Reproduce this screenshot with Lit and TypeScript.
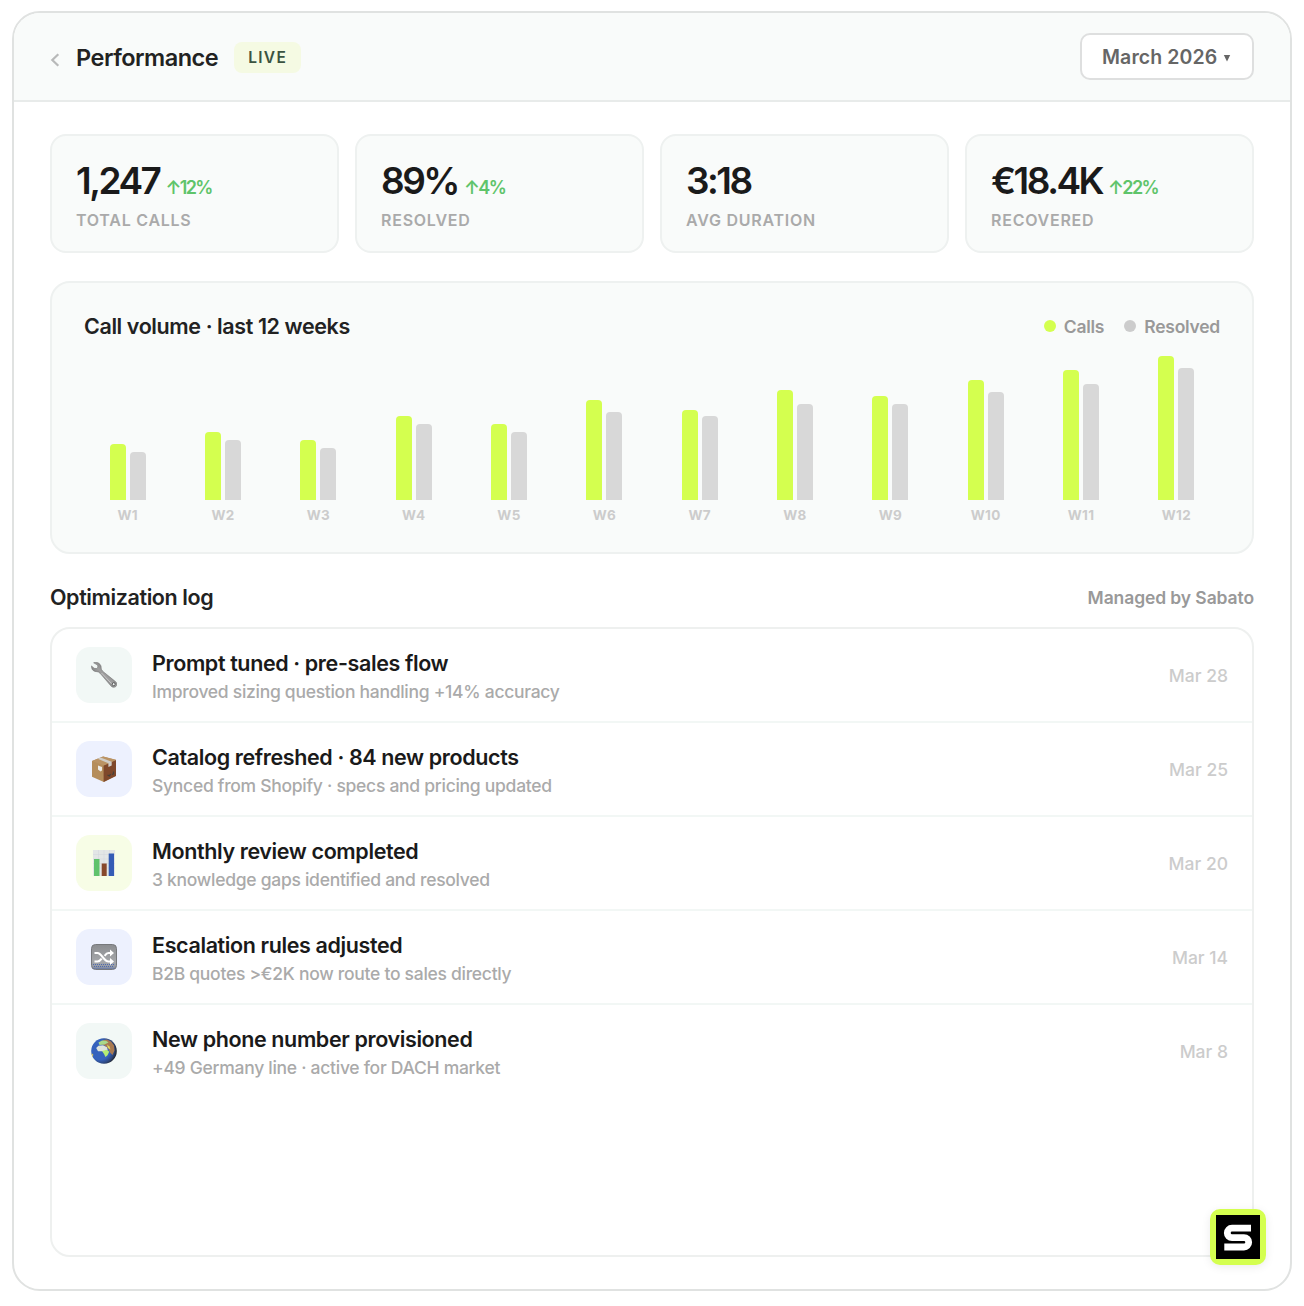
import { css, html, LitElement, svg } from 'lit'
import { customElement, property } from 'lit/decorators.js'

const stats = [
  { value: '1,247', delta: '↑12%', label: 'Total calls' },
  { value: '89%', delta: '↑4%', label: 'Resolved' },
  { value: '3:18', delta: '', label: 'Avg duration' },
  { value: '€18.4K', delta: '↑22%', label: 'Recovered' },
]

// [calls, resolved] per week, as bar heights
const weeks = [
  [56, 48],
  [68, 60],
  [60, 52],
  [84, 76],
  [76, 68],
  [100, 88],
  [90, 84],
  [110, 96],
  [104, 96],
  [120, 108],
  [130, 116],
  [144, 132],
]

const wrench = svg`
  <defs>
    <linearGradient id="steel" x1="0" y1="1" x2="1" y2="0">
      <stop offset="0" stop-color="#4c4c4c" />
      <stop offset="0.5" stop-color="#a0a0a0" />
      <stop offset="1" stop-color="#555" />
    </linearGradient>
  </defs>
  <path
    d="M2.6.8 6.6 3.1 6.9 5.2 5.4 6.6 3.2 6.3.5 3.9C.3 6.6 1.6 8.8 4 9.4c1.3.3 2.4.2 3.4.6 1.2.6 2 1.6 2.8 2.6l9.6 11.2c1.4 1.7 3.6 2 5.1.7 1.4-1.3 1.3-3.5-.4-4.9L12.9 10.2c-1.1-1-2-1.7-2.5-2.9-.4-1 0-2-.4-3.3C9.2 1.7 7 .2 4.3.2z"
    fill="url(#steel)"
    stroke="#666"
    stroke-width="0.5"
  />
  <path d="m10.5 11 10.2 10.8" stroke="#cacaca" stroke-width="0.9" />
  <circle cx="22.7" cy="22.2" r="1.5" fill="#f0f5f3" stroke="#444" stroke-width="0.8" />
`

const parcel = svg`
  <path d="m1 5 11-4.5L25 3.8v16L12.8 26 1 20.8z" fill="#b58d5b" />
  <path d="M12.6 9.5 25 4v16l-12.4 6z" fill="#7f482b" />
  <path d="m1 5 11.3-4.5L25 4 12.6 9.5z" fill="#ba9364" />
  <path d="m6.6 2.7 3-1.2 11.100 4.300v3.800l-3.300 1.500V7.300z" fill="#cfcdc8" />
  <path d="m7 9.500 4 1.600v3.400l-1.500 1L7 13.600z" fill="#ecebe7" />
  <path d="m16.5 19 2 1 1-2m1.500.5 1.500-.7v-2.300" fill="none" stroke="#45413a" stroke-width="1.2" />
`

const barChart = svg`
  <path d="M2 0h22v26H2z" fill="#e3e6e6" />
  <path d="M2 4.5h22M2 9h22M2 13.5h22M2 18h22M7.5 0v26M13 0v26M18.5 0v26" stroke="#d2d7dc" stroke-width="0.5" />
  <path d="M3 9h5.500v17H3z" fill="#60c26c" />
  <path d="M10.7 13.5h5V26h-5z" fill="#87482c" />
  <path d="M17.7 3.500H23V26h-5.300z" fill="#355cb5" />
`

const shuffle = svg`
  <defs>
    <linearGradient id="key" x1="0" y1="0" x2="0" y2="1">
      <stop offset="0" stop-color="#8b8d90" />
      <stop offset="0.7" stop-color="#a6a8ab" />
      <stop offset="1" stop-color="#8a90a0" />
    </linearGradient>
  </defs>
  <rect x="0.5" y="0.5" width="25" height="25" rx="4" fill="url(#key)" stroke="#77797c" />
  <path d="M2 20.500h22M3 22.500h20M2.500 24.300h21" stroke="#4363b1" stroke-width="0.9" stroke-dasharray="1 1" />
  <path
    d="M3.5 9h3c4 0 6.5 8.500 11 8.500h2.200M3.500 17.500h3c1.600 0 3-1.300 4.200-2.900M13.600 11.800C14.800 10.200 16 9 17.500 9h2.200"
    fill="none"
    stroke="#fff"
    stroke-width="2.2"
  />
  <path d="m19 5.600 4 3.400-4 3.400zM19 14.100l4 3.400-4 3.400z" fill="#fff" />
`

const globe = svg`
  <defs>
    <radialGradient id="sea" cx="0.35" cy="0.45" r="0.65">
      <stop offset="0.6" stop-color="#3562bd" />
      <stop offset="0.85" stop-color="#2d4578" />
      <stop offset="1" stop-color="#22252b" />
    </radialGradient>
  </defs>
  <circle cx="13" cy="13" r="12.8" fill="url(#sea)" />
  <path d="m12 2.200 4-.7 4 2 3 4 .5 5-2 4.500-2.500-2.500-1.500-3.500-3-3-4-2z" fill="#a97a51" />
  <path d="m7.500 4.500 3.500-2 4 .2 2.500 1.800-4 2-5 .5z" fill="#a9d98a" />
  <path d="m5.200 10 2.300-2.300 4.500-.5 4 2 .7 2.800-2.700 1-3 .3H7z" fill="#dfe4dc" />
  <path d="m11 13 5-1.200 2.200 2-1.700 3.500-2 1.700-1.500-3z" fill="#b4ec74" />
  <path d="m16 6.500 2.500 2 1 3-2.500-1.500z" fill="#dcd860" />
  <path d="m.3 15 2 1.500-.6 3z" fill="#d6c46a" />
`

const log = [
  {
    icon: wrench,
    tint: 'mint',
    title: 'Prompt tuned · pre-sales flow',
    detail: 'Improved sizing question handling +14% accuracy',
    date: 'Mar 28',
  },
  {
    icon: parcel,
    tint: 'blue',
    title: 'Catalog refreshed · 84 new products',
    detail: 'Synced from Shopify · specs and pricing updated',
    date: 'Mar 25',
  },
  {
    icon: barChart,
    tint: 'lime',
    title: 'Monthly review completed',
    detail: '3 knowledge gaps identified and resolved',
    date: 'Mar 20',
  },
  {
    icon: shuffle,
    tint: 'blue',
    title: 'Escalation rules adjusted',
    detail: 'B2B quotes >€2K now route to sales directly',
    date: 'Mar 14',
  },
  {
    icon: globe,
    tint: 'mint',
    title: 'New phone number provisioned',
    detail: '+49 Germany line · active for DACH market',
    date: 'Mar 8',
  },
]

/**
 * A single headline number with its label.
 */
@customElement('stat-card')
export class StatCard extends LitElement {
  @property()
  value = ''

  @property()
  delta = ''

  @property()
  label = ''

  static override styles = css`
    :host {
      display: block;
      box-sizing: border-box;
      height: 119px;
      padding: 23px 24px 0;
      border: 2px solid #eef1f0;
      border-radius: 16px;
      background: #f9fbfa;
    }

    .figure {
      display: flex;
      align-items: baseline;
      gap: 6px;
      height: 44px;
      line-height: 44px;
    }

    .value {
      color: #1a1a1a;
      font-size: 37px;
      font-weight: 600;
      letter-spacing: -2.5px;
    }

    .delta {
      color: #5fc46a;
      font-size: 18px;
      font-weight: 600;
      letter-spacing: -1.6px;
    }

    .label {
      margin-top: 6px;
      color: #aaa;
      font-size: 16px;
      font-weight: 600;
      line-height: 22px;
      letter-spacing: 0.75px;
      text-transform: uppercase;
    }
  `

  override render() {
    return html`
      <div class="figure">
        <span class="value">${this.value}</span>
        ${this.delta ? html`<span class="delta">${this.delta}</span>` : ''}
      </div>
      <div class="label">${this.label}</div>
    `
  }
}

@customElement('app-root')
export class AppRoot extends LitElement {
  static override styles = css`
    :host {
      display: block;
      box-sizing: border-box;
      width: 1304px;
      height: 1306px;
      padding: 11px 12px 15px;
      background: #fff;
      color: #1a1a1a;
      font-family: Inter, 'Liberation Sans', sans-serif;
    }

    * {
      box-sizing: border-box;
    }

    .window {
      position: relative;
      display: flex;
      flex-direction: column;
      height: 100%;
      border: 2px solid #e0e2e1;
      border-radius: 28px;
      overflow: hidden;
    }

    .header {
      display: flex;
      align-items: center;
      height: 89px;
      padding: 0 36px;
      border-bottom: 2px solid #e8ebea;
      background: #f9fbfa;
    }

    .back {
      width: 10px;
      height: 14px;
      margin: 6px 16px 0 0;
    }

    .title {
      margin: 2px 16px 0 0;
      color: #222;
      font-size: 23.5px;
      font-weight: 600;
      letter-spacing: -0.5px;
    }

    .live {
      margin-top: 2px;
      padding: 0 14px;
      border-radius: 8px;
      background: #f5fae3;
      color: #3b5340;
      font-size: 15.5px;
      font-weight: 600;
      line-height: 31px;
      letter-spacing: 1.3px;
    }

    .month {
      display: flex;
      align-items: center;
      gap: 6px;
      width: 174px;
      height: 47px;
      margin-left: auto;
      padding-left: 20px;
      border: 2px solid #dedfdf;
      border-radius: 10px;
      background: #fff;
      color: #666;
      font-size: 19.5px;
      font-weight: 600;
      letter-spacing: 0.1px;
    }

    .caret {
      width: 8px;
      height: 8px;
      margin-top: 3px;
    }

    .body {
      display: flex;
      flex: 1;
      flex-direction: column;
      padding: 32px 36px;
    }

    .stats {
      display: grid;
      grid-template-columns: repeat(4, 1fr);
      gap: 16px;
    }

    .chart {
      height: 273px;
      margin-top: 28px;
      padding: 28px 32px 0;
      border: 2px solid #eef1f0;
      border-radius: 20px;
      background: #f9fbfa;
    }

    .chart-head,
    .legend,
    .key {
      display: flex;
      align-items: center;
    }

    .chart-head {
      justify-content: space-between;
      height: 30px;
    }

    .heading {
      color: #222;
      font-size: 21.5px;
      font-weight: 600;
      letter-spacing: -0.4px;
    }

    .legend {
      gap: 20px;
    }

    .key {
      gap: 8px;
      color: #999;
      font-size: 17.5px;
      font-weight: 600;
      letter-spacing: -0.25px;
    }

    .dot {
      width: 12px;
      height: 12px;
      border-radius: 50%;
      background: #ccc;
    }

    .dot.calls {
      background: #d4ff4f;
    }

    .weeks {
      display: grid;
      grid-template-columns: repeat(12, 1fr);
      gap: 8px;
      margin-top: 15px;
    }

    .bars {
      display: flex;
      align-items: flex-end;
      justify-content: center;
      gap: 4px;
      height: 144px;
    }

    .bar {
      width: 16px;
      border-radius: 4px 4px 0 0;
      background: #d8d8d8;
    }

    .bar.calls {
      background: #d4ff4f;
    }

    .week {
      margin-top: 6px;
      color: #ccc;
      font-size: 13.5px;
      font-weight: 700;
      line-height: 18px;
      letter-spacing: 0.3px;
      text-align: center;
    }

    .log-head {
      display: flex;
      align-items: center;
      justify-content: space-between;
      height: 30px;
      margin: 28px 0 15px;
    }

    .managed {
      color: #999;
      font-size: 17.5px;
      font-weight: 600;
      letter-spacing: -0.1px;
    }

    .log {
      flex: 1;
      border: 2px solid #eef0ef;
      border-radius: 20px;
    }

    .entry {
      display: flex;
      align-items: center;
      height: 94px;
      padding: 0 24px;
      border-bottom: 2px solid #f2f7f5;
    }

    .entry:last-child {
      border-bottom-color: transparent;
    }

    .icon {
      display: grid;
      place-items: center;
      width: 56px;
      height: 56px;
      margin-right: 20px;
      border-radius: 14px;
    }

    .icon svg {
      width: 26px;
      height: 26px;
    }

    .icon.mint {
      background: #f2f8f6;
    }

    .icon.blue {
      background: #edf1fe;
    }

    .icon.lime {
      background: #f7fde6;
    }

    .text {
      flex: 1;
      padding-top: 3px;
    }

    .entry-title {
      font-size: 21.5px;
      font-weight: 600;
      line-height: 30px;
      letter-spacing: -0.38px;
    }

    .detail {
      color: #aaa;
      font-size: 17.5px;
      font-weight: 500;
      line-height: 27px;
      letter-spacing: -0.28px;
    }

    .date {
      color: #ccc;
      font-size: 17.5px;
      font-weight: 500;
    }

    .logo {
      position: absolute;
      right: 24px;
      bottom: 24px;
      width: 56px;
      height: 56px;
      padding: 6px;
      border-radius: 10px;
      background: #d4ff4f;
      box-shadow: 0 2px 10px rgba(0, 0, 0, 0.08);
    }

    .logo svg {
      display: block;
      background: #000;
    }
  `

  override render() {
    return html`
      <div class="window">
        <div class="header">
          <svg class="back" viewBox="0 0 10 14">
            <path d="M8.300 1.200 2.300 7l6 5.800" fill="none" stroke="#b8b9b9" stroke-width="2.2" />
          </svg>
          <div class="title">Performance</div>
          <div class="live">LIVE</div>
          <div class="month">
            <span>March 2026</span>
            <svg class="caret" viewBox="0 0 8 8">
              <path d="M.8 1h6.400L4 7.500z" fill="#666" />
            </svg>
          </div>
        </div>
        <div class="body">
          <div class="stats">
            ${stats.map(
              (s) => html`<stat-card value=${s.value} delta=${s.delta} label=${s.label}></stat-card>`
            )}
          </div>
          <div class="chart">
            <div class="chart-head">
              <div class="heading">Call volume · last 12 weeks</div>
              <div class="legend">
                <div class="key"><span class="dot calls"></span><span>Calls</span></div>
                <div class="key"><span class="dot"></span><span>Resolved</span></div>
              </div>
            </div>
            <div class="weeks">
              ${weeks.map(
                ([calls, resolved], i) => html`
                  <div>
                    <div class="bars">
                      <div class="bar calls" style="height: ${calls}px"></div>
                      <div class="bar" style="height: ${resolved}px"></div>
                    </div>
                    <div class="week">W${i + 1}</div>
                  </div>
                `
              )}
            </div>
          </div>
          <div class="log-head">
            <div class="heading">Optimization log</div>
            <div class="managed">Managed by Sabato</div>
          </div>
          <div class="log">
            ${log.map(
              (e) => html`
                <div class="entry">
                  <div class="icon ${e.tint}"><svg viewBox="0 0 26 26">${e.icon}</svg></div>
                  <div class="text">
                    <div class="entry-title">${e.title}</div>
                    <div class="detail">${e.detail}</div>
                  </div>
                  <div class="date">${e.date}</div>
                </div>
              `
            )}
          </div>
        </div>
        <div class="logo">
          <svg width="44" height="44" viewBox="0 0 44 44">
            <path
              d="M35 13.200H16a4.700 4.700 0 0 0 0 9.400h12a4.700 4.700 0 0 1 0 9.400H8.300"
              fill="none"
              stroke="#fff"
              stroke-width="6.8"
            />
          </svg>
        </div>
      </div>
    `
  }
}

declare global {
  interface HTMLElementTagNameMap {
    'app-root': AppRoot
    'stat-card': StatCard
  }
}
